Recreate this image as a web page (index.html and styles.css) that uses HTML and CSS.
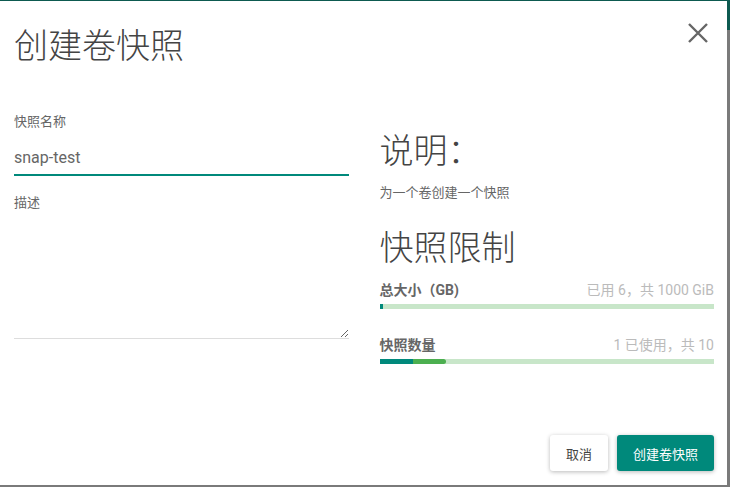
FILE: index.html
```html
<!DOCTYPE html>
<html lang="zh-CN">
<head>
<meta charset="utf-8">
<title>创建卷快照</title>
<link rel="stylesheet" href="styles.css">
</head>
<body>
<div class="dialog">
  <div class="header">
    <h1 class="title">创建卷快照</h1>
    <svg class="close" viewBox="0 0 20 20" width="20" height="20" aria-label="关闭">
      <path d="M1 1 L19 19 M19 1 L1 19" stroke="#666" stroke-width="2.4" fill="none"/>
    </svg>
  </div>
  <div class="body">
    <div class="col-left">
      <div class="label first">快照名称</div>
      <input class="input" type="text" value="snap-test">
      <div class="label second">描述</div>
      <textarea class="textarea"></textarea>
    </div>
    <div class="col-right">
      <h2 class="heading first">说明：</h2>
      <p class="desc">为一个卷创建一个快照</p>
      <h2 class="heading second">快照限制</h2>
      <div class="limit first">
        <div class="limit-row">
          <span class="limit-name">总大小（GB)</span>
          <span class="limit-value">已用 6，共 1000 GiB</span>
        </div>
        <div class="bar"><div class="bar-used" style="width:0.9%"></div></div>
      </div>
      <div class="limit second">
        <div class="limit-row">
          <span class="limit-name">快照数量</span>
          <span class="limit-value">1 已使用，共 10</span>
        </div>
        <div class="bar"><div class="bar-used" style="width:10%"></div><div class="bar-add" style="width:10%"></div></div>
      </div>
    </div>
  </div>
  <div class="footer">
    <button class="btn btn-cancel">取消</button>
    <button class="btn btn-primary">创建卷快照</button>
  </div>
</div>
</body>
</html>
```
FILE: styles.css
```css
html, body {
  margin: 0;
  padding: 0;
}
body {
  width: 730px;
  height: 487px;
  overflow: hidden;
  background: linear-gradient(#0d5a50 0, #0d5a50 30px, #7a7a7a 30px);
  font-family: "Roboto", "Noto Sans CJK SC", sans-serif;
}
.dialog {
  box-sizing: border-box;
  width: 727px;
  height: 484px;
  margin-top: 1px;
  background: #fff;
  display: flex;
  flex-direction: column;
  padding: 0 13px 14px 14px;
}
.header {
  display: flex;
  justify-content: space-between;
  align-items: flex-start;
}
.title {
  margin: 28px 0 0;
  font-size: 34px;
  line-height: 34px;
  font-weight: 300;
  color: #444;
}
.close {
  margin: 22px 6px 0 0;
  display: block;
}
.body {
  display: grid;
  grid-template-columns: 1fr 1fr;
  column-gap: 31px;
}
.col-left, .col-right {
  display: flex;
  flex-direction: column;
}
.label {
  font-size: 13px;
  line-height: 16px;
  color: #666;
}
.label.first { margin-top: 51px; }
.label.second { margin-top: 19px; }
.input {
  box-sizing: border-box;
  margin-top: 11px;
  height: 35px;
  width: 100%;
  border: none;
  border-bottom: 2px solid #00897b;
  padding: 0;
  font-family: "Roboto", "Noto Sans CJK SC", sans-serif;
  font-size: 16px;
  color: #666;
  outline: none;
  background: transparent;
}
.textarea {
  box-sizing: border-box;
  width: 100%;
  height: 128px;
  border: none;
  border-bottom: 1px solid #ddd;
  padding: 0;
  resize: vertical;
  outline: none;
  font-family: "Roboto", "Noto Sans CJK SC", sans-serif;
  font-size: 16px;
  color: #666;
  background: transparent;
}
.heading {
  margin: 0;
  font-size: 34px;
  line-height: 34px;
  font-weight: 300;
  color: #444;
}
.heading.first { margin-top: 71px; }
.heading.second { margin-top: 30px; }
.desc {
  margin: 17px 0 0;
  font-size: 13px;
  line-height: 16px;
  color: #666;
}
.limit.first { margin-top: 17px; }
.limit.second { margin-top: 28px; }
.limit-row {
  display: flex;
  justify-content: space-between;
  font-size: 14px;
  line-height: 16px;
}
.limit-name {
  font-weight: 700;
  color: #666;
}
.limit-value {
  color: #bbb;
}
.bar {
  margin-top: 6px;
  height: 5px;
  background: #c8e6c9;
  display: flex;
}
.bar-used {
  background: #00897b;
}
.bar-add {
  background: #4caf50;
  border-radius: 0 3px 3px 0;
}
.footer {
  margin-top: auto;
  display: flex;
  justify-content: flex-end;
  gap: 9px;
}
.btn {
  height: 36px;
  padding: 0 16px;
  border: none;
  border-radius: 3px;
  font-family: "Roboto", "Noto Sans CJK SC", sans-serif;
  font-size: 13px;
  box-shadow: 0 1px 4px rgba(0,0,0,0.28);
}
.btn-cancel {
  background: #fff;
  color: #444;
}
.btn-primary {
  background: #00897b;
  color: #fff;
}
```
